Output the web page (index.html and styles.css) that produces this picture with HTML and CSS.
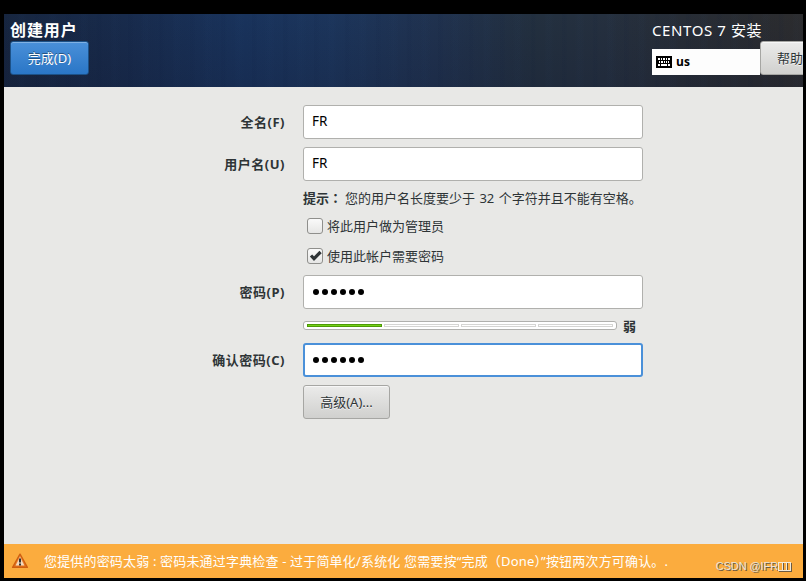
FILE: index.html
```html
<!DOCTYPE html>
<html lang="zh-CN">
<head>
  <meta charset="UTF-8">
  <title>创建用户</title>
  <link rel="stylesheet" href="styles.css">
</head>
<body>

  <div class="window">
    <header class="header">
      <div class="header-left">
        <h1>创建用户</h1>
        <button class="btn btn-done">完成(D)</button>
      </div>
      <div class="header-right">
        <div class="product">CENTOS 7 安装</div>
        <div class="header-tools">
          <div class="keyboard">
            <svg width="16" height="12" viewBox="0 0 16 12" shape-rendering="crispEdges">
              <rect width="16" height="12" rx="1" fill="#000"/>
              <path d="M2 3h2M5 3h1M7 3h2M10 3h1M12 3h2M3 6h1M5 6h2M8 6h1M10 6h1M12 6h1M2 9h2M5 9h6M12 9h2" stroke="#fff" stroke-width="2"/>
            </svg>
            <span>us</span>
          </div>
          <button class="btn btn-help">帮助</button>
        </div>
      </div>
    </header>

    <main class="form">
      <div class="row">
        <label for="fullname">全名(F)</label>
        <input class="entry" type="text" id="fullname" value="FR">
      </div>
      <div class="row">
        <label for="username">用户名(U)</label>
        <input class="entry" type="text" id="username" value="FR">
      </div>
      <div class="hint"><b>提示<span class="colon" lang="zh-TW">：</span></b><span>您的用户名长度要少于 32 个字符并且不能有空格。</span></div>
      <div class="check">
        <span class="box"></span>
        <span class="check-text">将此用户做为管理员</span>
      </div>
      <div class="check">
        <span class="box">
          <svg width="14" height="14" viewBox="0 0 14 14">
            <path d="M3 6.5L6 9.6L12.6 3" fill="none" stroke="#2e3436" stroke-width="3.2"/>
          </svg>
        </span>
        <span class="check-text">使用此帐户需要密码</span>
      </div>
      <div class="row row-password">
        <label>密码(P)</label>
        <div class="entry dots"><i></i><i></i><i></i><i></i><i></i><i></i></div>
      </div>
      <div class="strength">
        <div class="meter">
          <span class="on"></span>
          <span></span>
          <span></span>
          <span></span>
        </div>
        <b>弱</b>
      </div>
      <div class="row">
        <label>确认密码(C)</label>
        <div class="entry dots focused"><i></i><i></i><i></i><i></i><i></i><i></i></div>
      </div>
      <button class="btn btn-advanced">高级(A)...</button>
    </main>

    <footer class="warning">
      <svg width="18" height="16" viewBox="0 0 18 16">
        <defs>
          <linearGradient id="warn" x1="0" y1="0" x2="0" y2="1">
            <stop offset="0" stop-color="#f8a45a"/>
            <stop offset="1" stop-color="#e06a14"/>
          </linearGradient>
        </defs>
        <path d="M9 1.2L16.4 14.4H1.6Z" fill="url(#warn)" stroke="#cf5f10" stroke-width="1.4" stroke-linejoin="round"/>
        <path d="M9 4L13.4 12.6H4.6Z" fill="#f3d9bd"/>
        <path d="M9 5.5v4M9 10.5v2" stroke="#222" stroke-width="1.8"/>
      </svg>
      <span class="message">您提供的密码太弱 : 密码未通过字典检查 - 过于简单化/系统化 您需要按“完成（Done）”按钮两次方可确认。.</span>
      <div class="watermark">CSDN @IFR<i></i><i></i><i></i></div>
    </footer>
  </div>

</body>
</html>
```
FILE: styles.css
```css
* {
  box-sizing: border-box;
}

body {
  margin: 0;
  padding: 14px 3px 3px 4px;
  height: 581px;
  background: #000;
  color: #2e3436;
  font-family: "Noto Sans", "Noto Sans CJK SC", sans-serif;
  font-size: 13px;
  overflow: hidden;
}

.window {
  height: 564px;
  background: #e8e8e6;
  display: flex;
  flex-direction: column;
  overflow: hidden;
}

/* header */
.header {
  height: 73px;
  flex: none;
  display: flex;
  justify-content: space-between;
  color: #fff;
  background:
    linear-gradient(transparent, rgba(15, 20, 45, 0.2)),
    repeating-linear-gradient(90deg, rgba(10, 25, 60, 0.06) 0 3px, transparent 6px 13px, rgba(50, 90, 140, 0.03) 16px 19px, transparent 23px 31px),
    linear-gradient(90deg, #172640 0, #182b4c 120px, #19335c 240px, #1c355b 330px, #20324f 430px, #23303f 530px, #25303f 600px, #272d36 680px, #2c2c2e 799px);
}

.header-left {
  padding: 4px 0 0 6px;
}

h1 {
  margin: 0;
  height: 23px;
  font-size: 16px;
  line-height: 24px;
  letter-spacing: 0.9px;
}

.btn {
  display: block;
  height: 34px;
  padding: 0 0 1px;
  border: 1px solid #a6a6a3;
  border-radius: 3px;
  background: linear-gradient(#ebebea, #d0d0ce);
  box-shadow: inset 0 1px #f7f7f7;
  color: #2e3436;
  font-family: inherit;
  font-size: 13px;
  text-shadow: 0 1px rgba(255, 255, 255, 0.7);
}

.btn-done {
  width: 79px;
  border-color: #1c5187;
  background: linear-gradient(#4a90d9, #2a76c6);
  box-shadow: inset 0 1px #80b1e4;
  color: #fff;
  text-shadow: 0 -1px rgba(0, 0, 0, 0.4);
}

.header-right {
  width: 151px;
  padding-top: 5px;
}

.product {
  height: 22px;
  font-size: 15px;
  line-height: 23px;
  letter-spacing: 0.6px;
  white-space: nowrap;
}

.header-tools {
  display: flex;
  align-items: flex-end;
}

.keyboard {
  flex: none;
  width: 108px;
  height: 26px;
  padding-left: 4px;
  display: flex;
  align-items: center;
  gap: 4px;
  background: #fdfdfd;
  color: #000;
  font: bold 12px "Open Sans", sans-serif;
}

.keyboard span {
  padding-bottom: 1px;
}

.btn-help {
  flex: none;
  width: 74px;
  padding-left: 16px;
  text-align: left;
}

/* form */
.form {
  flex: 1;
  padding-top: 18px;
}

.row {
  display: flex;
  align-items: center;
  height: 34px;
  margin-bottom: 8px;
}

.row label {
  width: 281px;
  margin-right: 18px;
  padding-bottom: 1px;
  font-weight: bold;
  letter-spacing: 0.5px;
  text-align: right;
}

.entry {
  width: 340px;
  height: 34px;
  padding: 0 8px 2px;
  border: 1px solid #b0b0ad;
  border-radius: 3px;
  background: #fff;
  color: #000;
  font-family: inherit;
  font-size: 13.5px;
}

.dots {
  display: flex;
  align-items: center;
  gap: 3px;
  padding: 0 0 1px 9px;
}

.dots i {
  width: 6px;
  height: 6px;
  border-radius: 50%;
  background: #000;
}

.focused {
  border: 2px solid #4a90d9;
  padding-left: 8px;
}

.hint {
  display: flex;
  height: 22px;
  padding-left: 299px;
  line-height: 18px;
  word-spacing: 1px;
  white-space: nowrap;
}

.hint b {
  width: 42px;
}

.colon {
  font-family: "Noto Sans CJK TC", sans-serif;
}

.check {
  display: flex;
  align-items: center;
  gap: 4px;
  height: 30px;
  padding-left: 303px;
}

.check-text {
  padding-bottom: 1px;
}

.box {
  width: 16px;
  height: 16px;
  border: 1px solid #8f8f8c;
  border-radius: 3px;
  background: linear-gradient(#fafafa, #e6e6e5);
}

.box svg {
  display: block;
}

.row-password {
  margin: 4px 0 0;
}

.strength {
  display: flex;
  align-items: center;
  gap: 6px;
  height: 34px;
  padding: 0 0 2px 299px;
}

.meter {
  width: 314px;
  height: 9px;
  padding: 2px;
  padding-left: 3px;
  display: flex;
  gap: 2px;
  border: 1px solid #b0b0ad;
  border-radius: 3px;
  background: #fff;
}

.meter span {
  width: 75px;
  height: 3px;
  border: 1px solid #d5d5d3;
}

.meter .on {
  border-color: #4e9a06;
  background: #73d216;
}

.btn-advanced {
  width: 87px;
  margin-left: 299px;
}

/* bottom message bar */
.warning {
  position: relative;
  height: 34px;
  flex: none;
  padding-left: 7px;
  display: flex;
  align-items: center;
  background: #fbac3e;
  color: #fff;
}

.message {
  margin-left: 15px;
  padding-bottom: 1px;
  letter-spacing: 0.17px;
  white-space: nowrap;
}

.watermark {
  position: absolute;
  right: 13px;
  bottom: 4px;
  display: flex;
  align-items: center;
  color: #e9e4da;
  font: 11px/16px "Liberation Sans", sans-serif;
  letter-spacing: -0.1px;
  text-shadow: 1px 1px #6b5a42;
}

.watermark i {
  width: 5px;
  height: 9px;
  margin-right: -1px;
  border: 1px solid #f3ead8;
  box-shadow: 1px 1px #6b5a42;
}
```
